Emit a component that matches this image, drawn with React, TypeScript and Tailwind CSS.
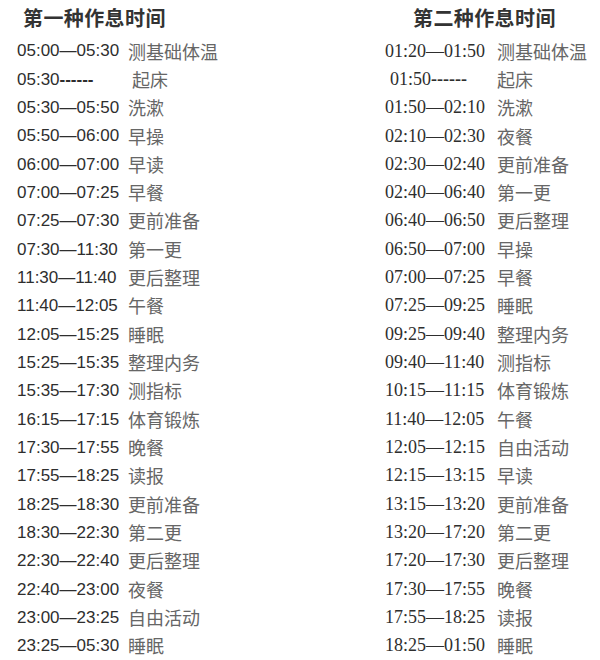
import React from "react";

type Row = [string, string, boolean?];

const left: Row[] = [
  ["05:00—05:30", "测基础体温"],
  ["05:30", "起床", true],
  ["05:30—05:50", "洗漱"],
  ["05:50—06:00", "早操"],
  ["06:00—07:00", "早读"],
  ["07:00—07:25", "早餐"],
  ["07:25—07:30", "更前准备"],
  ["07:30—11:30", "第一更"],
  ["11:30—11:40", "更后整理"],
  ["11:40—12:05", "午餐"],
  ["12:05—15:25", "睡眠"],
  ["15:25—15:35", "整理内务"],
  ["15:35—17:30", "测指标"],
  ["16:15—17:15", "体育锻炼"],
  ["17:30—17:55", "晚餐"],
  ["17:55—18:25", "读报"],
  ["18:25—18:30", "更前准备"],
  ["18:30—22:30", "第二更"],
  ["22:30—22:40", "更后整理"],
  ["22:40—23:00", "夜餐"],
  ["23:00—23:25", "自由活动"],
  ["23:25—05:30", "睡眠"],
];

const right: Row[] = [
  ["01:20—01:50", "测基础体温"],
  ["01:50", "起床", true],
  ["01:50—02:10", "洗漱"],
  ["02:10—02:30", "夜餐"],
  ["02:30—02:40", "更前准备"],
  ["02:40—06:40", "第一更"],
  ["06:40—06:50", "更后整理"],
  ["06:50—07:00", "早操"],
  ["07:00—07:25", "早餐"],
  ["07:25—09:25", "睡眠"],
  ["09:25—09:40", "整理内务"],
  ["09:40—11:40", "测指标"],
  ["10:15—11:15", "体育锻炼"],
  ["11:40—12:05", "午餐"],
  ["12:05—12:15", "自由活动"],
  ["12:15—13:15", "早读"],
  ["13:15—13:20", "更前准备"],
  ["13:20—17:20", "第二更"],
  ["17:20—17:30", "更后整理"],
  ["17:30—17:55", "晚餐"],
  ["17:55—18:25", "读报"],
  ["18:25—01:50", "睡眠"],
];

export default function App() {
  return (
    <div className="w-[600px] h-[660px] bg-white flex overflow-hidden">
      {/* Left column */}
      <div className="w-[385px] shrink-0 pl-[17px] flex flex-col">
        <div className="h-[37px] flex items-center pl-[6px] text-[20px] font-bold text-[#333] tracking-[0.4px] font-['Noto_Sans_CJK_SC',sans-serif]">
          第一种作息时间
        </div>
        {left.map(([t, a, dash]) => (
          <div key={t + a} className="h-[28.45px] flex items-center">
            <div className="w-[111px] shrink-0 text-[17px] text-[#2e2e2e] whitespace-nowrap font-['Liberation_Sans',Arial,sans-serif]">
              {t}
              {dash ? <span className="font-bold">------</span> : null}
            </div>
            <div
              className={
                dash
                  ? "pl-[4px] text-[18px] text-[#666] whitespace-nowrap font-['Noto_Sans_CJK_SC',sans-serif]"
                  : "text-[18px] text-[#666] whitespace-nowrap font-['Noto_Sans_CJK_SC',sans-serif]"
              }
            >
              {a}
            </div>
          </div>
        ))}
      </div>
      {/* Right column */}
      <div className="flex-1 flex flex-col">
        <div className="h-[37px] flex items-center pl-[28px] text-[20px] font-bold text-[#333] tracking-[0.4px] font-['Noto_Sans_CJK_SC',sans-serif]">
          第二种作息时间
        </div>
        {right.map(([t, a, dash]) => (
          <div key={t + a} className="h-[28.45px] flex items-center">
            <div
              className={
                dash
                  ? "w-[112px] shrink-0 pl-[5px] text-[18px] text-[#2e2e2e] whitespace-nowrap font-['Liberation_Serif','Times_New_Roman',serif]"
                  : "w-[112px] shrink-0 text-[18px] text-[#2e2e2e] whitespace-nowrap font-['Liberation_Serif','Times_New_Roman',serif]"
              }
            >
              {t}
              {dash ? <span className="font-bold">------</span> : null}
            </div>
            <div className="text-[18px] text-[#666] whitespace-nowrap font-['Noto_Sans_CJK_SC',sans-serif]">
              {a}
            </div>
          </div>
        ))}
      </div>
    </div>
  );
}
